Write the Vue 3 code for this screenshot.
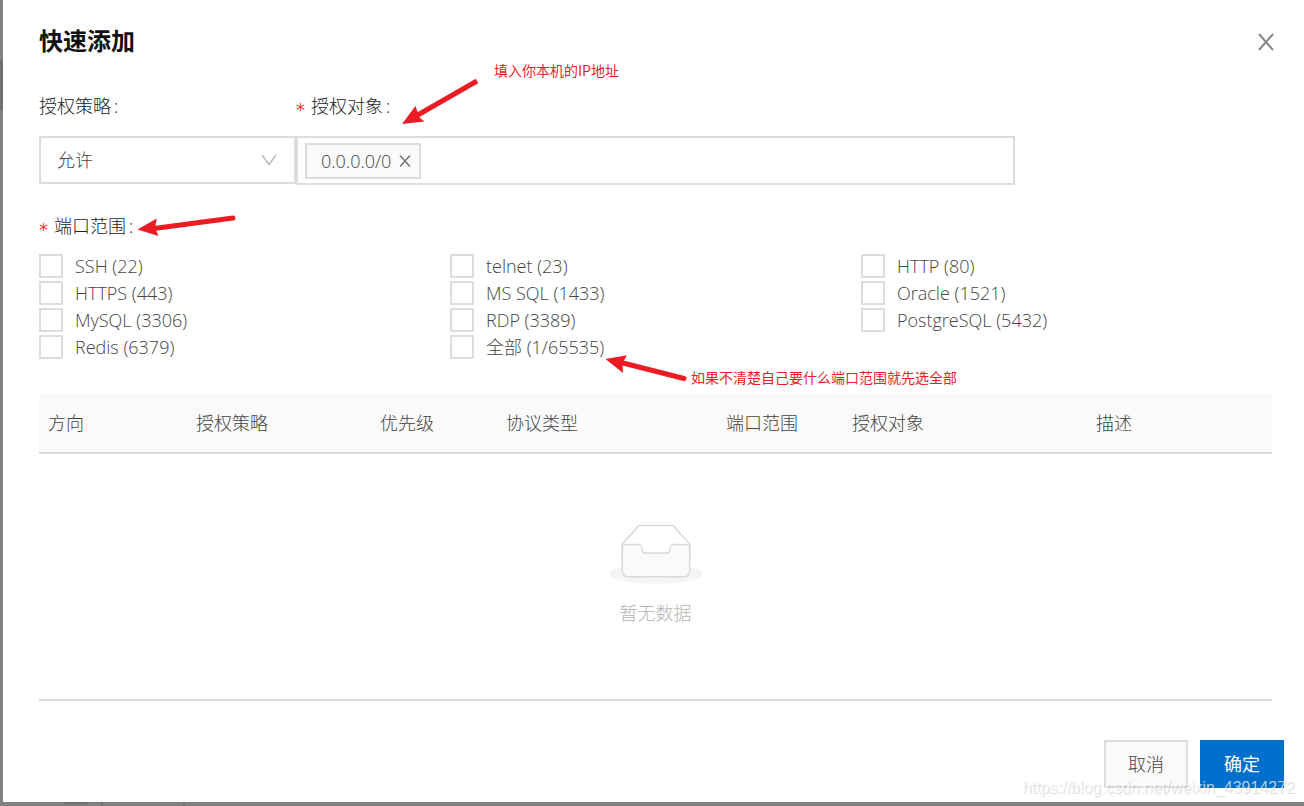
<script setup>
import { ref } from 'vue'

const policy = ref('allow')
const draft = ref('')
const targets = ref(['0.0.0.0/0'])
const picked = ref([])
const ports = [
  'SSH (22)', 'telnet (23)', 'HTTP (80)',
  'HTTPS (443)', 'MS SQL (1433)', 'Oracle (1521)',
  'MySQL (3306)', 'RDP (3389)', 'PostgreSQL (5432)',
  'Redis (6379)', '全部 (1/65535)'
]
const columns = [
  { title: '方向', width: 148 },
  { title: '授权策略', width: 184 },
  { title: '优先级', width: 126 },
  { title: '协议类型', width: 220 },
  { title: '端口范围', width: 126 },
  { title: '授权对象', width: 244 },
  { title: '描述', width: 185 }
]
</script>

<template>
  <div class="backdrop">
    <span class="behind side"></span>
    <span class="behind block"></span>
    <span class="behind cell"></span>

    <section class="dialog" role="dialog" aria-labelledby="dialog-title">
      <header class="head">
        <h1 id="dialog-title">快速添加</h1>
        <button class="close" type="button" aria-label="关闭">
          <svg width="16" height="18" viewBox="0 0 16 18"><path d="M1 1L15 17M15 1L1 17" /></svg>
        </button>
      </header>

      <form class="body" @submit.prevent>
        <div class="fields">
          <div class="field">
            <label class="label" for="policy">授权策略<i class="colon">:</i></label>
            <div class="select">
              <select id="policy" v-model="policy">
                <option value="allow">允许</option>
                <option value="deny">拒绝</option>
              </select>
              <svg width="16" height="12" viewBox="0 0 16 12"><path d="M1 1L8 10.500L15 1" /></svg>
            </div>
          </div>
          <div class="field">
            <label class="label" for="target"><b class="star">*</b>授权对象<i class="colon">:</i></label>
            <div class="tags">
              <span v-for="(t, i) in targets" :key="t" class="tag">
                {{ t }}
                <button type="button" aria-label="移除" @click="targets.splice(i, 1)">
                  <svg width="12" height="12" viewBox="0 0 12 12"><path d="M1 0.500L11 11.500M11 0.500L1 11.500" /></svg>
                </button>
              </span>
              <input id="target" v-model="draft" type="text" />
            </div>
          </div>
        </div>

        <fieldset class="range">
          <legend class="label"><b class="star">*</b>端口范围<i class="colon">:</i></legend>
          <div class="ports">
            <label v-for="p in ports" :key="p" class="port">
              <input v-model="picked" type="checkbox" :value="p" />{{ p }}
            </label>
          </div>
        </fieldset>

        <table class="rules">
          <colgroup>
            <col v-for="c in columns" :key="c.title" :style="{ width: c.width + 'px' }" />
          </colgroup>
          <thead>
            <tr><th v-for="c in columns" :key="c.title" scope="col">{{ c.title }}</th></tr>
          </thead>
          <tbody>
            <tr>
              <td :colspan="columns.length">
                <div class="empty">
                  <svg width="94" height="60" viewBox="0 0 64 41">
                    <g transform="translate(0 1)" fill="none">
                      <ellipse fill="#f5f5f5" cx="32" cy="33" rx="32" ry="7" />
                      <g stroke="#d9d9d9">
                        <path d="M55 12.760L44.854 1.258C44.367.474 43.656 0 42.907 0H21.093c-.749 0-1.460.474-1.947 1.257L9 12.761V22h46v-9.240z" fill="#fff" />
                        <path d="M41.613 15.931c0-1.605.994-2.930 2.227-2.931H55v18.137C55 33.260 53.680 35 52.050 35h-40.100C10.320 35 9 33.259 9 31.137V13h11.160c1.233 0 2.227 1.323 2.227 2.928v.022c0 1.605 1.005 2.901 2.237 2.901h14.752c1.232 0 2.237-1.308 2.237-2.913v-.007z" fill="#fafafa" />
                      </g>
                    </g>
                  </svg>
                  <span>暂无数据</span>
                </div>
              </td>
            </tr>
          </tbody>
        </table>
      </form>

      <footer class="foot">
        <button type="button">取消</button>
        <button type="button" class="primary">确定</button>
      </footer>
    </section>

    <svg class="arrows" width="1304" height="806" viewBox="0 0 1304 806">
      <path class="shaft flat" d="M416 116L477 81" />
      <path d="M402 124L415.500 106L418 113L419 117L424.500 121.500Z" />
      <path class="shaft" d="M154 228.500L233 218" />
      <path d="M137.500 229.500L156.700 218.500L155 228L158.500 236Z" />
      <path class="shaft" d="M621 362.500L684 378.500" />
      <path d="M605.500 359L627 355.300L622.500 363L623 373Z" />
    </svg>
    <span class="note note-ip">填入你本机的IP地址</span>
    <span class="note note-port">如果不清楚自己要什么端口范围就先选全部</span>
    <span class="watermark">https://blog.csdn.net/weixin_43914272</span>
  </div>
</template>

<style>
body {
  background: #808080;
}
</style>

<style scoped>
.backdrop {
  position: relative;
  box-sizing: border-box;
  min-height: 100vh;
  padding: 0 0 4px 3px;
  display: flex;
  overflow: hidden;
  background: #808080;
  color: #444;
  font: 300 18px/28px "Open Sans", "Noto Sans CJK SC", sans-serif;
}
.behind {
  position: absolute;
}
.side {
  left: 0;
  top: 60px;
  width: 3px;
  height: 50px;
  background: #6f6f6f;
}
.block {
  left: 65px;
  bottom: 2px;
  width: 24px;
  height: 2px;
  background: #6f6f6f;
}
.cell {
  left: 101px;
  bottom: 0;
  width: 80px;
  height: 4px;
  border: solid #6f6f6f;
  border-width: 0 2px;
}
.dialog {
  flex: 1;
  display: flex;
  flex-direction: column;
  background: #fff;
}
.head {
  display: flex;
  justify-content: space-between;
  align-items: center;
  padding: 22px 30px 0 36px;
}
h1 {
  margin: 0;
  color: #111;
  font: 700 24px/36px "Noto Sans CJK SC", sans-serif;
}
button {
  font: inherit;
  color: inherit;
  cursor: pointer;
}
.close {
  display: flex;
  padding: 4px 0 0;
  border: 0;
  background: none;
}
.close path {
  stroke: #888;
  stroke-width: 2;
}
.body {
  flex: 1;
  padding: 34px 32px 0 36px;
}
.fields {
  display: grid;
  grid-template-columns: 257fr 719fr 257fr;
}
.label {
  display: block;
  padding: 0;
  color: #222;
}
.star {
  display: inline-block;
  width: 15px;
  color: #f33;
  font: 400 18px/18px "DejaVu Sans", sans-serif;
  vertical-align: -3px;
}
.colon {
  margin-left: 3px;
  font-style: normal;
}
.field .label {
  margin-bottom: 16px;
}
.select {
  display: grid;
  align-items: center;
}
.select select,
.select svg {
  grid-area: 1 / 1;
}
.select svg {
  justify-self: end;
  margin-right: 19px;
  pointer-events: none;
}
.select path {
  fill: none;
  stroke: #bbb;
  stroke-width: 1.500;
}
select {
  appearance: none;
  width: 100%;
  height: 48px;
  padding: 0 16px;
  border: 2px solid #ddd;
  border-radius: 0;
  background: #fff;
  color: inherit;
  font: inherit;
}
.tags {
  display: flex;
  align-items: center;
  padding: 5px 7px 4px;
  border: 2px solid #ddd;
}
.tag {
  display: flex;
  align-items: center;
  gap: 8px;
  padding: 2px 8px 2px 14px;
  border: 2px solid #ddd;
  background: #fafafa;
}
.tag button {
  display: flex;
  padding: 0;
  border: 0;
  background: none;
}
.tag path {
  stroke: #777;
  stroke-width: 1.500;
}
.tags input {
  flex: 1;
  min-width: 0;
  padding: 0;
  border: 0;
  outline: 0;
  font: inherit;
}
.range {
  margin: 27px 0 0;
  padding: 0;
  border: 0;
}
.ports {
  display: grid;
  grid-template-columns: repeat(3, 1fr);
  gap: 3px 0;
  margin-top: 14px;
}
.port {
  display: flex;
  align-items: center;
  gap: 12px;
  line-height: 24px;
}
.port input {
  appearance: none;
  width: 24px;
  height: 24px;
  margin: 0;
  border: 2px solid #ddd;
  background: #fff;
}
.port input:checked {
  background: #0070cc;
}
.rules {
  width: 100%;
  margin-top: 35px;
  table-layout: fixed;
  border-collapse: separate;
  border-spacing: 0;
}
th {
  padding: 15px 9px;
  border-bottom: 2px solid #ddd;
  background: #fafafa;
  font-weight: 300;
  text-align: left;
}
td {
  padding: 70px 0 72px;
  border-bottom: 2px solid #ddd;
}
.empty {
  display: flex;
  flex-direction: column;
  align-items: center;
  gap: 15px;
  color: #b4b4b4;
}
.foot {
  display: flex;
  justify-content: flex-end;
  gap: 12px;
  padding: 0 20px 14px;
}
.foot button {
  padding: 8px 22px;
  border: 2px solid #ddd;
  background: #fafafa;
}
.foot .primary {
  border-color: #0070cc;
  background: #0070cc;
  color: #fff;
  font-weight: 400;
}
.arrows {
  position: absolute;
  left: 0;
  top: 0;
  fill: #ed1c24;
  pointer-events: none;
}
.shaft {
  stroke: #ed1c24;
  stroke-width: 5;
  stroke-linecap: round;
}
.flat {
  stroke-linecap: butt;
}
.note {
  position: absolute;
  color: #ed1c24;
  font: 400 14px/20px "Noto Sans CJK SC", sans-serif;
  white-space: nowrap;
}
.note-ip {
  left: 494px;
  top: 60px;
}
.note-port {
  left: 691px;
  top: 367px;
}
.watermark {
  position: absolute;
  right: 9px;
  bottom: 8px;
  color: rgba(255, 255, 255, 0.7);
  font: 16px/20px "Liberation Sans", Arial, sans-serif;
  text-shadow: 1px 1px 1px rgba(0, 0, 0, 0.16);
  pointer-events: none;
}
</style>
